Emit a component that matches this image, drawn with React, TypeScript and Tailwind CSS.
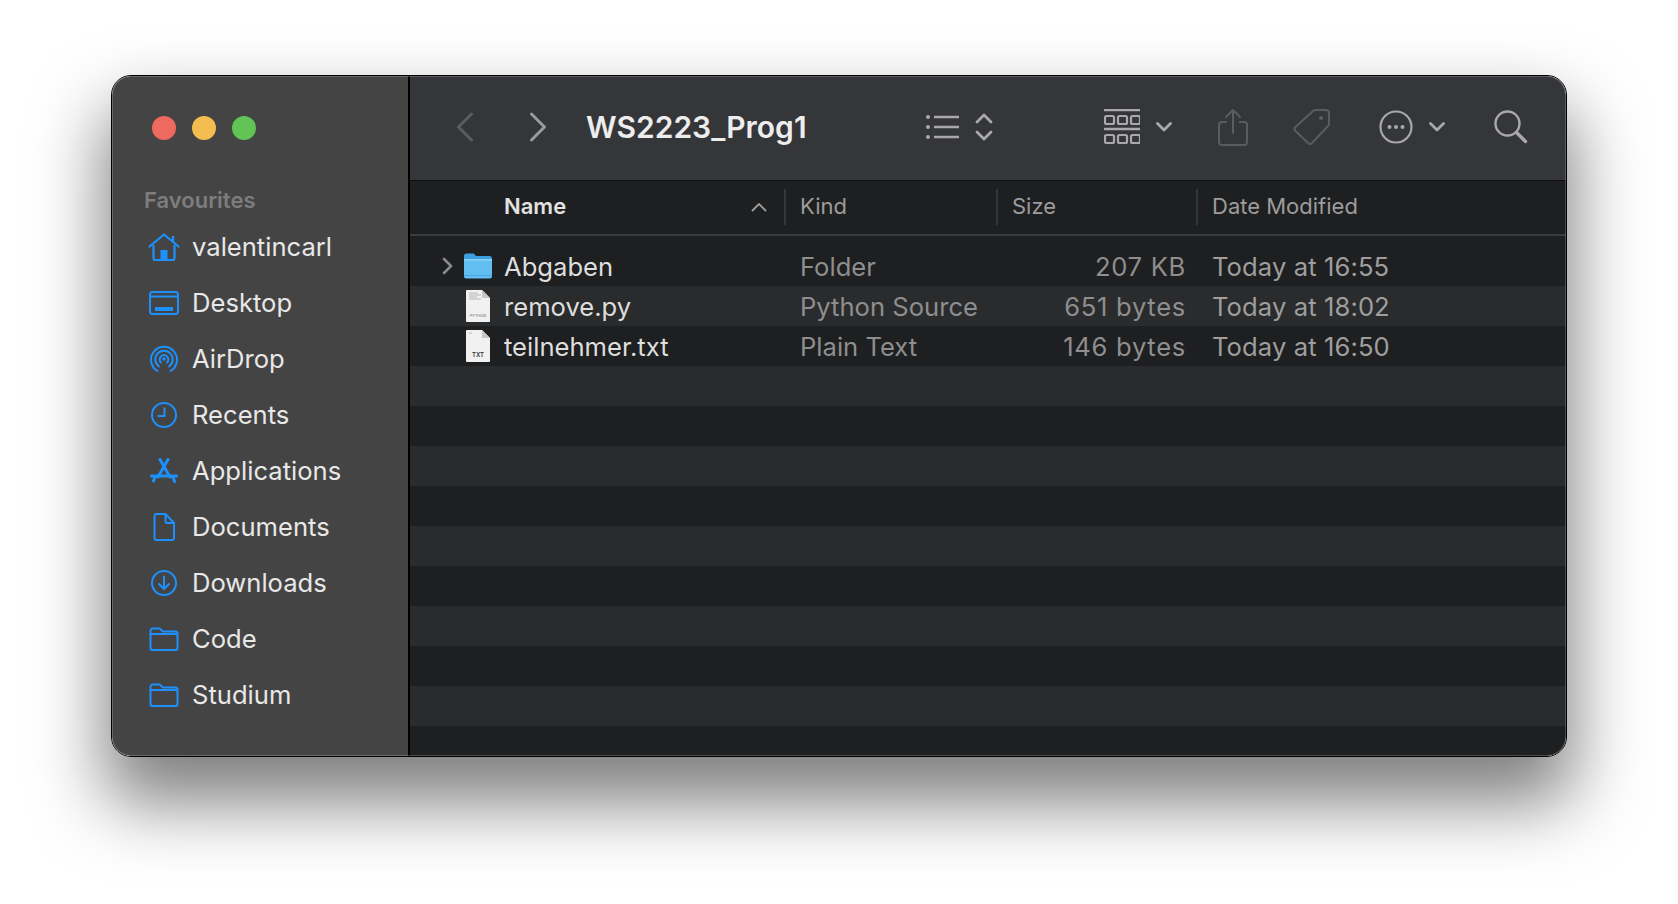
import type { ReactNode } from "react";

const blue = "#1e90fb";

function Svg({ w, h, children, className }: { w: number; h: number; children: ReactNode; className?: string }) {
  return (
    <svg width={w} height={h} viewBox={`0 0 ${w} ${h}`} fill="none" className={className}>
      {children}
    </svg>
  );
}

const FolderIcon = () => (
  <Svg w={30} h={24}>
    <path d="M1.500 7V3.500a2 2 0 0 1 2-2h7l3.500 3h12.500a2 2 0 0 1 2 2V21a2 2 0 0 1-2 2h-23a2 2 0 0 1-2-2V7h27" stroke={blue} strokeWidth="2" strokeLinejoin="round" />
  </Svg>
);

const sidebarItems: { label: string; icon: ReactNode }[] = [
  {
    label: "valentincarl",
    icon: (
      <Svg w={32} h={28}>
        <path d="M1.500 13.500 16 1.500l14.500 12" stroke={blue} strokeWidth="2.200" strokeLinecap="round" strokeLinejoin="round" />
        <path d="M25 3v6" stroke={blue} strokeWidth="2.500" />
        <path d="M5.500 12v13.500a1.500 1.500 0 0 0 1.500 1.500h18a1.500 1.500 0 0 0 1.500-1.500V12" stroke={blue} strokeWidth="2.200" />
        <rect x="12.500" y="17" width="7" height="10" fill={blue} />
      </Svg>
    ),
  },
  {
    label: "Desktop",
    icon: (
      <Svg w={30} h={24}>
        <rect x="1" y="1" width="28" height="22" rx="2.500" stroke={blue} strokeWidth="2" />
        <path d="M1 5.500h28" stroke={blue} strokeWidth="2" />
        <rect x="6" y="16" width="18" height="4" fill={blue} />
      </Svg>
    ),
  },
  {
    label: "AirDrop",
    icon: (
      <Svg w={28} h={28}>
        <path d="M7.500 26A13 13 0 1 1 20.500 26" stroke={blue} strokeWidth="2" strokeLinecap="round" />
        <path d="M9 21.500A8.700 8.700 0 1 1 19 21.500" stroke={blue} strokeWidth="2" strokeLinecap="round" />
        <path d="M11 17.500A4.300 4.300 0 1 1 17 17.500" stroke={blue} strokeWidth="2" strokeLinecap="round" />
        <circle cx="14" cy="14" r="1.800" fill={blue} />
      </Svg>
    ),
  },
  {
    label: "Recents",
    icon: (
      <Svg w={26} h={26}>
        <circle cx="13" cy="13" r="12" stroke={blue} strokeWidth="2" />
        <path d="M13.500 5.500v8.500H6.500" stroke={blue} strokeWidth="2" />
      </Svg>
    ),
  },
  {
    label: "Applications",
    icon: (
      <Svg w={28} h={26}>
        <path d="M10 1.500 20 19M18 1.500 8 19M23 19l1.500 4.500M5 19l-1.500 4" stroke={blue} strokeWidth="3" strokeLinecap="round" />
        <path d="M1.500 18h25" stroke={blue} strokeWidth="3" strokeLinecap="round" />
      </Svg>
    ),
  },
  {
    label: "Documents",
    icon: (
      <Svg w={22} h={28}>
        <path d="M3.500 1h9L21 10v15a2 2 0 0 1-2 2H3.500a2 2 0 0 1-2-2V3a2 2 0 0 1 2-2Z" stroke={blue} strokeWidth="2" strokeLinejoin="round" />
        <path d="M12.500 1v7a2 2 0 0 0 2 2H21" stroke={blue} strokeWidth="2" />
      </Svg>
    ),
  },
  {
    label: "Downloads",
    icon: (
      <Svg w={26} h={26}>
        <circle cx="13" cy="13" r="12" stroke={blue} strokeWidth="2" />
        <path d="M13 6.500v12M8 14l5 5 5-5" stroke={blue} strokeWidth="2" strokeLinecap="round" strokeLinejoin="round" />
      </Svg>
    ),
  },
  { label: "Code", icon: <FolderIcon /> },
  { label: "Studium", icon: <FolderIcon /> },
];

const gray = "#a9a9a9";
const faint = "#5b5c5f";

function ListViewIcon() {
  return (
    <Svg w={34} h={26}>
      <circle cx="3" cy="3" r="2" fill={gray} />
      <circle cx="3" cy="13" r="2" fill={gray} />
      <circle cx="3" cy="23" r="2" fill={gray} />
      <path d="M9 3h25M9 13h25M9 23h25" stroke={gray} strokeWidth="2.400" />
    </Svg>
  );
}

function UpDownIcon() {
  return (
    <Svg w={18} h={28}>
      <path d="M2 9l7-7 7 7M2 19l7 7 7-7" stroke={gray} strokeWidth="2.800" strokeLinecap="round" strokeLinejoin="round" />
    </Svg>
  );
}

function GroupIcon() {
  const cells = [0, 13, 26];
  return (
    <Svg w={36} h={36}>
      <path d="M0 1h36M0 20h36" stroke={gray} strokeWidth="2.400" />
      {cells.map((x) => (
        <g key={x}>
          <rect x={x + 1} y="7" width="9" height="8" rx="1.500" stroke={gray} strokeWidth="2.200" />
          <rect x={x + 1} y="26" width="9" height="8" rx="1.500" stroke={gray} strokeWidth="2.200" />
        </g>
      ))}
    </Svg>
  );
}

function SmallChevron() {
  return (
    <Svg w={16} h={10}>
      <path d="M1.500 1.500 8 8l6.500-6.500" stroke={gray} strokeWidth="2.800" strokeLinecap="round" strokeLinejoin="round" />
    </Svg>
  );
}

function PageIcon({ label, small }: { label: string; small?: boolean }) {
  return (
    <svg width={24} height={32} viewBox="0 0 24 32">
      <path d="M1 0h15l8 8v23a1 1 0 0 1-1 1H1a1 1 0 0 1-1-1V1a1 1 0 0 1 1-1Z" fill="#f1f1f1" />
      <path d="M16 0l8 8h-7a1 1 0 0 1-1-1Z" fill="#c8c8c8" />
      {small && <path d="M3 3h9M3 5h12M3 7h8M3 9h12" stroke="#b5b5b5" strokeWidth="1" />}
      {!small && <path d="M3 3h3" stroke="#b5b5b5" strokeWidth="1" />}
      <text
        x="12"
        y="27"
        textAnchor="middle"
        fontSize={small ? 3.800 : 6}
        fontFamily="Inter, sans-serif"
        fontWeight={small ? 400 : 600}
        fill={small ? "#666" : "#333"}
      >
        {label}
      </text>
    </svg>
  );
}

function BlueFolder() {
  return (
    <svg width={28} height={26} viewBox="0 0 28 26">
      <path d="M0 3a2.500 2.500 0 0 1 2.500-2.500h6.500c1.300 0 2 1.500 3 2.500h13.500A2.500 2.500 0 0 1 28 5.500V10H0Z" fill="#3c9fdd" />
      <path d="M0 6h28v17.500a2 2 0 0 1-2 2H2a2 2 0 0 1-2-2Z" fill="#62bdf0" />
      <path d="M0 6h28v1.500H0Z" fill="#8ad0f6" />
      <path d="M0 22.500h28" stroke="#4aa5dc" strokeWidth="1" />
    </svg>
  );
}

const files = [
  { name: "Abgaben", kind: "Folder", size: "207 KB", date: "Today at 16:55", type: "folder" },
  { name: "remove.py", kind: "Python Source", size: "651 bytes", date: "Today at 18:02", type: "py" },
  { name: "teilnehmer.txt", kind: "Plain Text", size: "146 bytes", date: "Today at 16:50", type: "txt" },
];

const emptyRows = Array.from({ length: 10 }, (_, i) => i);

export default function App() {
  return (
    <div className="h-[904px] w-[1678px] overflow-hidden bg-white pl-[111px] pt-[75px] font-['Inter',sans-serif]">
      <div className="relative h-[682px] w-[1456px] rounded-[20px] border border-black shadow-[0_40px_70px_6px_rgba(0,0,0,0.5)]">
        <div className="flex h-full w-full overflow-hidden rounded-[19px]">
          <aside className="flex w-[298px] shrink-0 flex-col border-r-2 border-black bg-[#444444]">
            <div className="flex gap-4 pl-[40px] pt-[40px]">
              <span className="h-6 w-6 rounded-full bg-[#ee6a5f]" />
              <span className="h-6 w-6 rounded-full bg-[#f5bd4f]" />
              <span className="h-6 w-6 rounded-full bg-[#61c454]" />
            </div>
            <div className="mt-[47px] pl-[32px] text-[22px] font-semibold leading-[26px] text-[#7d7d7d]">Favourites</div>
            <nav className="mt-[6px] flex flex-col">
              {sidebarItems.map((item) => (
                <div key={item.label} className="flex h-[56px] items-center text-[25.6px] text-[#e8e8e8]">
                  <span className="flex w-[80px] shrink-0 justify-center pl-[23px] pr-[0px]">{item.icon}</span>
                  <span>{item.label}</span>
                </div>
              ))}
            </nav>
          </aside>

          <main className="flex min-w-0 flex-1 flex-col">
            <div className="flex h-[105px] shrink-0 items-center border-b border-[#0f0f10] bg-[#35363a] pb-[2px]">
              <span className="ml-[46px] w-[73px]">
                <Svg w={18} h={30}>
                  <path d="M15.500 2 2.500 15l13 13" stroke={faint} strokeWidth="3" strokeLinecap="round" strokeLinejoin="round" />
                </Svg>
              </span>
              <span className="w-[57px]">
                <Svg w={18} h={30}>
                  <path d="M2.500 2l13 13-13 13" stroke="#9b9b9b" strokeWidth="3" strokeLinecap="round" strokeLinejoin="round" />
                </Svg>
              </span>
              <span className="w-[339px] text-[30px] font-semibold text-[#ededed]">WS2223_Prog1</span>
              <span className="w-[50px]">
                <ListViewIcon />
              </span>
              <span className="w-[129px]">
                <UpDownIcon />
              </span>
              <span className="w-[52px]">
                <GroupIcon />
              </span>
              <span className="w-[62px]">
                <SmallChevron />
              </span>
              <span className="w-[75px]">
                <Svg w={30} h={38}>
                  <path d="M9 14H4a3 3 0 0 0-3 3v17a3 3 0 0 0 3 3h22a3 3 0 0 0 3-3V17a3 3 0 0 0-3-3h-5" stroke={faint} strokeWidth="2" />
                  <path d="M15 25V2M8 9l7-7 7 7" stroke={faint} strokeWidth="2" strokeLinecap="round" strokeLinejoin="round" />
                </Svg>
              </span>
              <span className="w-[86px]">
                <Svg w={38} h={38}>
                  <path d="M22 2h11a3 3 0 0 1 3 3v11a3 3 0 0 1-1 2L19 35a3 3 0 0 1-4 0L2.500 23a3 3 0 0 1 0-4L20 3a3 3 0 0 1 2-1Z" stroke={faint} strokeWidth="2" strokeLinejoin="round" />
                  <circle cx="28" cy="10" r="2" fill={faint} />
                </Svg>
              </span>
              <span className="w-[50px]">
                <Svg w={34} h={34}>
                  <circle cx="17" cy="17" r="15.500" stroke={gray} strokeWidth="2.200" />
                  <circle cx="10.500" cy="17" r="2" fill={gray} />
                  <circle cx="17" cy="17" r="2" fill={gray} />
                  <circle cx="23.500" cy="17" r="2" fill={gray} />
                </Svg>
              </span>
              <span className="w-[65px]">
                <SmallChevron />
              </span>
              <span>
                <Svg w={34} h={34}>
                  <circle cx="13.500" cy="13.500" r="12" stroke={gray} strokeWidth="2.400" />
                  <path d="M22.500 22.500 31.500 31.500" stroke={gray} strokeWidth="3.400" strokeLinecap="round" />
                </Svg>
              </span>
            </div>

            <div className="flex h-[55px] shrink-0 items-center border-b-2 border-[#3a3b3d] bg-[#1e1f21] pb-[2px] text-[22px] text-[#9c9c9c]">
              <div className="flex h-[36px] w-[376px] items-center justify-between border-r-2 border-[#36373a] pl-[94px] pr-[17px]">
                <span className="font-semibold text-[#e2e2e2]">Name</span>
                <Svg w={16} h={10}>
                  <path d="M1.500 8.500 8 2l6.500 6.500" stroke="#9c9c9c" strokeWidth="1.800" strokeLinecap="round" strokeLinejoin="round" />
                </Svg>
              </div>
              <div className="flex h-[36px] w-[212px] items-center border-r-2 border-[#36373a] pl-[14px]">Kind</div>
              <div className="flex h-[36px] w-[200px] items-center border-r-2 border-[#36373a] pl-[14px]">Size</div>
              <div className="pl-[14px]">Date Modified</div>
            </div>

            <div className="min-h-0 flex-1 overflow-hidden bg-[#1e1f21] pt-[10px] text-[25.6px]">
              {files.map((file, i) => (
                <div key={file.name} className={`flex h-[40px] items-center ${i % 2 === 1 ? "bg-[#2a2b2d]" : ""}`}>
                  <span className="flex w-[94px] shrink-0 items-center">
                    <span className="w-[32px] pl-[32px]">
                      {file.type === "folder" && (
                        <Svg w={12} h={18}>
                          <path d="M2 2l7 7-7 7" stroke="#8a8a8a" strokeWidth="2.600" strokeLinecap="round" strokeLinejoin="round" />
                        </Svg>
                      )}
                    </span>
                    <span className="ml-[22px] flex w-[28px] justify-center">
                      {file.type === "folder" && <BlueFolder />}
                      {file.type === "py" && <PageIcon label="PYTHON" small />}
                      {file.type === "txt" && <PageIcon label="TXT" />}
                    </span>
                  </span>
                  <span className="w-[296px] shrink-0 pt-[2px] text-[#dedede]">{file.name}</span>
                  <span className="w-[206px] shrink-0 pt-[2px] text-[#8e8e8e]">{file.kind}</span>
                  <span className="w-[180px] shrink-0 pt-[2px] text-right tracking-[0.7px] text-[#8e8e8e]">{file.size}</span>
                  <span className="pl-[26px] pt-[2px] tracking-[0.1px] text-[#9e9e9e]">{file.date}</span>
                </div>
              ))}
              {emptyRows.map((i) => (
                <div key={i} className={`h-[40px] ${i % 2 === 0 ? "bg-[#2a2b2d]" : ""}`} />
              ))}
            </div>
          </main>
        </div>
        <div className="pointer-events-none absolute inset-0 rounded-[19px] shadow-[inset_0_0_0_1px_rgba(255,255,255,0.2)]" />
      </div>
    </div>
  );
}
